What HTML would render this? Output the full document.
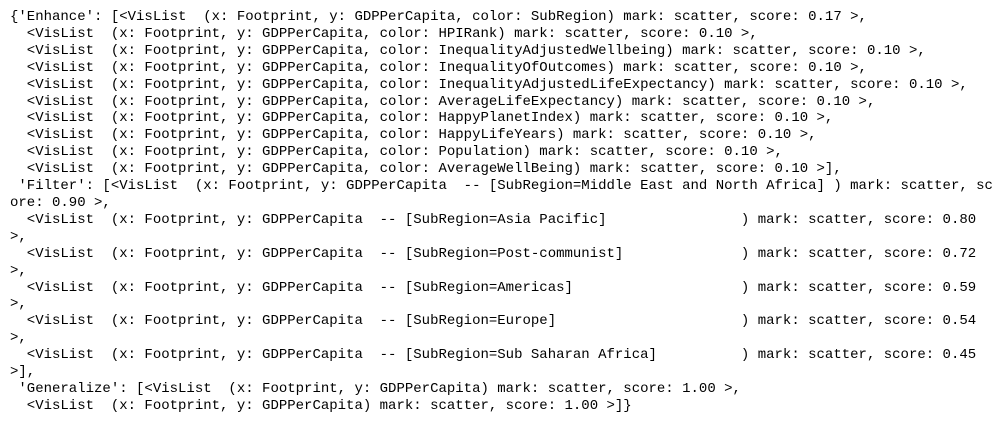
<!DOCTYPE html>
<html><head><meta charset="utf-8"><style>
html,body{margin:0;padding:0;background:#fff;width:1008px;height:423px;overflow:hidden}
pre{margin:0;position:absolute;left:10px;top:9px;font-family:"Liberation Mono","Courier New","DejaVu Sans Mono",monospace;font-size:14px;line-height:16.9px;color:#000;white-space:pre;font-variant-ligatures:none}
</style></head><body><pre>{'Enhance': [&lt;VisList  (x: Footprint, y: GDPPerCapita, color: SubRegion) mark: scatter, score: 0.17 &gt;,
  &lt;VisList  (x: Footprint, y: GDPPerCapita, color: HPIRank) mark: scatter, score: 0.10 &gt;,
  &lt;VisList  (x: Footprint, y: GDPPerCapita, color: InequalityAdjustedWellbeing) mark: scatter, score: 0.10 &gt;,
  &lt;VisList  (x: Footprint, y: GDPPerCapita, color: InequalityOfOutcomes) mark: scatter, score: 0.10 &gt;,
  &lt;VisList  (x: Footprint, y: GDPPerCapita, color: InequalityAdjustedLifeExpectancy) mark: scatter, score: 0.10 &gt;,
  &lt;VisList  (x: Footprint, y: GDPPerCapita, color: AverageLifeExpectancy) mark: scatter, score: 0.10 &gt;,
  &lt;VisList  (x: Footprint, y: GDPPerCapita, color: HappyPlanetIndex) mark: scatter, score: 0.10 &gt;,
  &lt;VisList  (x: Footprint, y: GDPPerCapita, color: HappyLifeYears) mark: scatter, score: 0.10 &gt;,
  &lt;VisList  (x: Footprint, y: GDPPerCapita, color: Population) mark: scatter, score: 0.10 &gt;,
  &lt;VisList  (x: Footprint, y: GDPPerCapita, color: AverageWellBeing) mark: scatter, score: 0.10 &gt;],
 'Filter': [&lt;VisList  (x: Footprint, y: GDPPerCapita  -- [SubRegion=Middle East and North Africa] ) mark: scatter, sc
ore: 0.90 &gt;,
  &lt;VisList  (x: Footprint, y: GDPPerCapita  -- [SubRegion=Asia Pacific]                ) mark: scatter, score: 0.80
&gt;,
  &lt;VisList  (x: Footprint, y: GDPPerCapita  -- [SubRegion=Post-communist]              ) mark: scatter, score: 0.72
&gt;,
  &lt;VisList  (x: Footprint, y: GDPPerCapita  -- [SubRegion=Americas]                    ) mark: scatter, score: 0.59
&gt;,
  &lt;VisList  (x: Footprint, y: GDPPerCapita  -- [SubRegion=Europe]                      ) mark: scatter, score: 0.54
&gt;,
  &lt;VisList  (x: Footprint, y: GDPPerCapita  -- [SubRegion=Sub Saharan Africa]          ) mark: scatter, score: 0.45
&gt;],
 'Generalize': [&lt;VisList  (x: Footprint, y: GDPPerCapita) mark: scatter, score: 1.00 &gt;,
  &lt;VisList  (x: Footprint, y: GDPPerCapita) mark: scatter, score: 1.00 &gt;]}</pre></body></html>
